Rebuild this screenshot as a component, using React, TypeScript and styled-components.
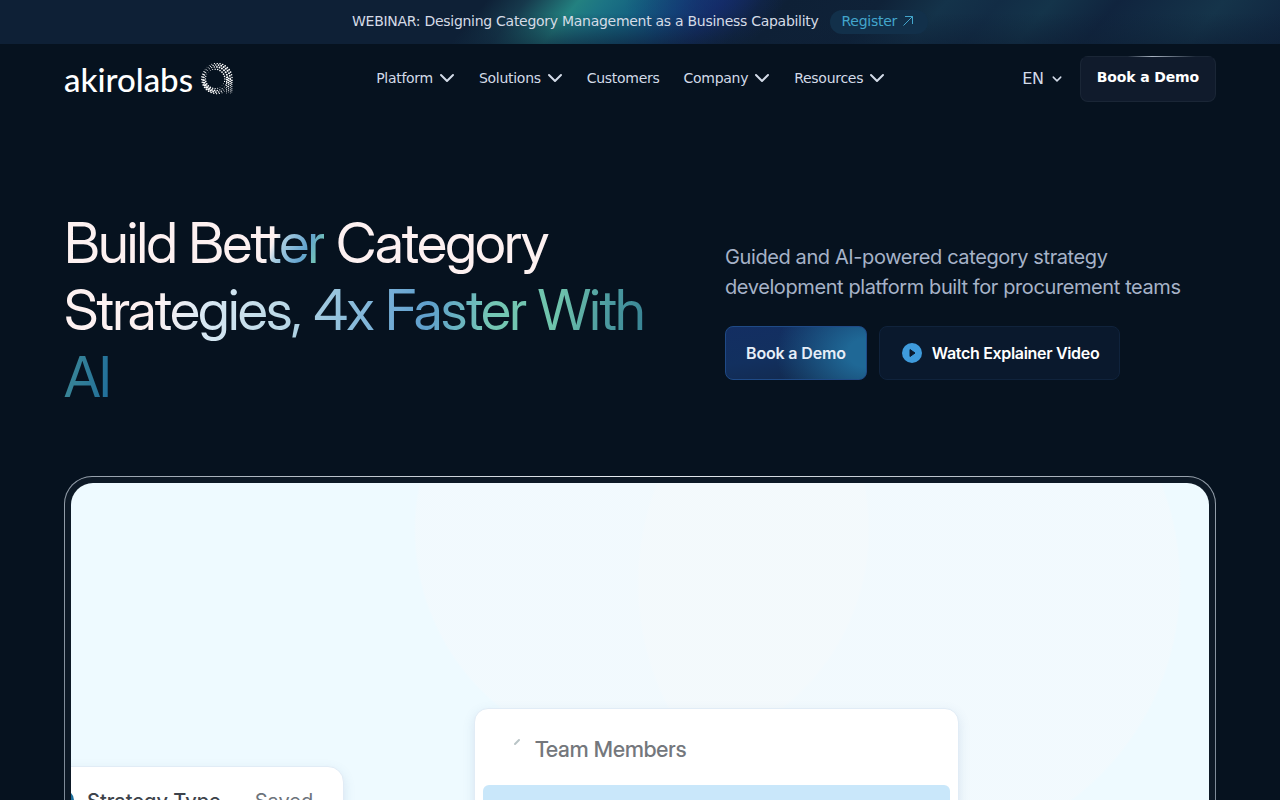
import React from "react";
import styled, { createGlobalStyle } from "styled-components";

const uiFont = `"DejaVu Sans", sans-serif`;
const brandFont = `Inter, sans-serif`;
const displayFont = `"Inter Display", Inter, sans-serif`;

const GlobalStyle = createGlobalStyle`
  *, *::before, *::after { box-sizing: border-box; }
  body {
    margin: 0;
    background: #06121f;
    color: #fff;
    font-family: ${brandFont};
  }
  a { color: inherit; text-decoration: none; }
  button { font: inherit; color: inherit; cursor: pointer; }
`;

const Page = styled.div`
  height: 100vh;
  overflow: hidden;
`;

const Banner = styled.aside`
  display: flex;
  align-items: center;
  justify-content: center;
  gap: 11px;
  height: 44px;
  font-family: ${uiFont};
  font-size: 14px;
  line-height: 20px;
  letter-spacing: -0.02em;
  color: #d5dbe6;
  background:
    linear-gradient(180deg, transparent 30%, rgba(14, 32, 54, 0.6) 100%),
    radial-gradient(80px 50px at 55% 0%, rgba(22, 40, 108, 0.5), transparent),
    linear-gradient(130deg,
      #0e2036 0%, #0e2036 37%, #16394c 40%, #238180 44%, #1c7484 46%, #146180 49%,
      #12497a 52%, #132e66 55%, #0f2340 58%, #0e2036 60%, #0f2238 67%, #14334a 72%,
      #122c45 76%, #14344a 80%, #10243e 85%, #15344a 93%, #10243e 100%);
`;

const BannerText = styled.p`
  margin: 0;
  padding-bottom: 2px;
`;

const RegisterLink = styled.a`
  display: flex;
  align-items: center;
  gap: 5px;
  height: 24px;
  padding: 0 14px 2px 12px;
  border-radius: 12px;
  background: #12304a;
  color: #43a6cc;
`;

const Header = styled.header`
  display: flex;
  align-items: center;
  justify-content: space-between;
  height: 70px;
  padding: 0 64px;
  font-family: ${uiFont};
`;

const Brand = styled.a`
  display: flex;
  align-items: center;
  gap: 8px;
  font-family: Lato, sans-serif;
  font-size: 33px;
  line-height: 32px;
  font-weight: 500;
`;

const Nav = styled.nav`
  display: flex;
  gap: 24px;
  padding: 0 0 2px 6px;
`;

const NavItem = styled.button`
  display: flex;
  align-items: center;
  gap: 6px;
  padding: 0;
  border: 0;
  background: none;
  color: #d3dbe8;
  font-size: 14px;
  line-height: 20px;
  letter-spacing: -0.02em;
`;

const HeaderActions = styled.div`
  display: flex;
  align-items: center;
  gap: 18px;
`;

const LanguageButton = styled(NavItem)`
  font-size: 16px;
  gap: 8px;
`;

const HeaderDemo = styled.a`
  height: 46px;
  padding: 10px 16px;
  border: 1px solid #1a2636;
  border-top-color: transparent;
  border-radius: 8px;
  background:
    linear-gradient(90deg, #1a2636 35%, #a9b4c2 53%, #1a2636 85%) top / 100% 1px no-repeat border-box,
    #101b2c;
  font-size: 14px;
  line-height: 20px;
  font-weight: 700;
  letter-spacing: -0.01em;
`;

const Hero = styled.main`
  padding: 96px 64px 0;
`;

const Intro = styled.section`
  display: grid;
  grid-template-columns: 585px 1fr;
  gap: 76px;
  align-items: center;
`;

const Title = styled.h1`
  margin: 0;
  font-family: ${displayFont};
  font-size: 56px;
  line-height: 67px;
  font-weight: 400;
  letter-spacing: -0.032em;
  color: #fdf1f1;
`;

const TitleLead = styled.span`
  color: transparent;
  background: linear-gradient(115deg,
    #fdf1f1 0%, #fdf1f1 77%, #a9cde0 80%, #63a3cf 89%, #74c6b4 95%, #74c6b4 100%);
  -webkit-background-clip: text;
  background-clip: text;
`;

const TitleAccent = styled.span`
  color: transparent;
  background: linear-gradient(100deg,
    #fdf1f1 0%, #fdf1f1 15%, #d8e8f3 23%, #bcd9e7 35%, #8fbfdb 45%, #78b0d8 51%,
    #5f9fcc 58%, #74c6b4 68%, #6fc4ac 78%, #4d9ba0 86%, #3a8696 92%, #22709a 99%);
  -webkit-background-clip: text;
  background-clip: text;
`;

const Pitch = styled.div`
  display: flex;
  flex-direction: column;
  gap: 24px;
`;

const Lead = styled.p`
  margin: 0;
  font-size: 20px;
  line-height: 30px;
  letter-spacing: -0.02em;
  color: #a6b3c8;
`;

const ButtonRow = styled.div`
  display: flex;
  gap: 12px;
`;

const ActionButton = styled.button<{ $primary?: boolean }>`
  display: flex;
  align-items: center;
  gap: 8px;
  height: 54px;
  padding: 0 20px;
  border: 1px solid ${(p) => (p.$primary ? "#1f4a86" : "#10233c")};
  border-radius: 8px;
  background: ${(p) =>
    p.$primary
      ? "radial-gradient(90px 70px at 100% 50%, #1f6896 20%, transparent), linear-gradient(170deg, #132e62, #12305f 50%, #12284a)"
      : "#0a192d"};
  font-size: 16px;
  line-height: 24px;
  font-weight: 600;
  letter-spacing: ${(p) => (p.$primary ? "-0.01em" : "-0.02em")};
  color: ${(p) => (p.$primary ? "#e6eef8" : "#fff")};
`;

const Frame = styled.section`
  height: 560px;
  margin-top: 65px;
  padding: 6px;
  border-radius: 28px;
  border: 1px solid transparent;
  background:
    linear-gradient(#0d1926, #0d1926) padding-box,
    radial-gradient(700px 420px at 50% 0, #e8edf2, #7f8b98) border-box;
`;

const Demo = styled.div`
  position: relative;
  height: 100%;
  overflow: hidden;
  border-radius: 22px;
  background:
    radial-gradient(circle at 838px 100px, rgba(245, 249, 252, 0.5) 0 270px, transparent 272px),
    radial-gradient(circle at 571px 47px, rgba(245, 249, 252, 0.5) 0 226px, transparent 228px),
    #eefaff;
  color: #3d434b;
`;

const Card = styled.div`
  position: absolute;
  background: #fff;
  border: 1px solid #e1ecf6;
  box-shadow: 0 4px 12px rgba(90, 120, 170, 0.16);
  font-size: 20px;
  line-height: 28px;
`;

const StrategyCard = styled(Card)`
  top: 283px;
  left: -20px;
  display: flex;
  gap: 34px;
  width: 293px;
  height: 200px;
  padding: 20px 0 0 35px;
  border-radius: 16px;
  font-weight: 500;
`;

const StatusDot = styled.i`
  position: absolute;
  top: 23px;
  left: 2px;
  width: 20px;
  height: 20px;
  border-radius: 50%;
  background: #1c6f9c;
`;

const Saved = styled.span`
  color: #6d737b;
  font-weight: 400;
`;

const TeamCard = styled(Card)`
  top: 225px;
  left: 403px;
  width: 485px;
  height: 300px;
  padding: 26px 8px 0;
  border-radius: 14px;
  font-family: ${displayFont};
  font-size: 22px;
  font-weight: 500;
  color: #74777c;
`;

const TeamHeading = styled.div`
  display: flex;
  gap: 12px;
  padding-left: 28px;
`;

const Selection = styled.div`
  height: 60px;
  margin-top: 22px;
  border-radius: 6px;
  background: #c9e7fa;
`;

const Chevron = ({ size }: { size: number }) => (
  <svg width={size} height={size} viewBox="0 0 16 16" fill="none" stroke="currentColor" strokeWidth={size > 12 ? 2 : 2.4} strokeLinecap="round" strokeLinejoin="round" aria-hidden="true">
    <path d="M2 5l6 6 6-6" />
  </svg>
);

const markDots: { x: number; y: number; r: number }[] = [];
[
  { cx: 14.6, cy: 16.4, radius: 10, count: 24 },
  { cx: 15.2, cy: 16.2, radius: 12.2, count: 28 },
  { cx: 16, cy: 16, radius: 14, count: 31 },
  { cx: 16.4, cy: 16, radius: 15.6, count: 34 },
].forEach(({ cx, cy, radius, count }, ring) => {
  for (let i = 0; i < count; i++) {
    const a = (i / count) * Math.PI * 2 + ring * 0.1;
    const weight = Math.abs(Math.cos(a + 0.75));
    const edge = ring === 0 || ring === 3 ? 0.3 : 0.45;
    markDots.push({ x: cx + Math.cos(a) * radius, y: cy + Math.sin(a) * radius, r: edge + weight * 0.6 });
  }
});
[26.4, 28.4, 30.2, 31.8].forEach((x, col) => {
  for (let y = 15 + col; y < 32; y += 2) markDots.push({ x, y, r: 0.9 - (y - 12) * 0.022 });
});

const LogoMark = () => (
  <svg width="32" height="32" viewBox="0 0 33 33" fill="#fff" aria-hidden="true">
    {markDots.map((d, i) => (
      <circle key={i} cx={d.x} cy={d.y} r={d.r} />
    ))}
  </svg>
);

const navItems = [
  { label: "Platform", menu: true },
  { label: "Solutions", menu: true },
  { label: "Customers", menu: false },
  { label: "Company", menu: true },
  { label: "Resources", menu: true },
];

export default function App() {
  return (
    <Page>
      <GlobalStyle />
      <Banner>
        <BannerText>WEBINAR: Designing Category Management as a Business Capability</BannerText>
        <RegisterLink href="#register">
          Register
          <svg width="12" height="12" viewBox="0 0 12 12" fill="none" stroke="currentColor" aria-hidden="true">
            <path d="M1.500 10.500L10.500 1.500M3 1.500h7.500v7.500" />
          </svg>
        </RegisterLink>
      </Banner>
      <Header>
        <Brand href="#home">
          akirolabs
          <LogoMark />
        </Brand>
        <Nav>
          {navItems.map((item) =>
            item.menu ? (
              <NavItem key={item.label} type="button">
                {item.label}
                <Chevron size={16} />
              </NavItem>
            ) : (
              <NavItem key={item.label} as="a" href="#customers">
                {item.label}
              </NavItem>
            )
          )}
        </Nav>
        <HeaderActions>
          <LanguageButton type="button">
            EN
            <Chevron size={10} />
          </LanguageButton>
          <HeaderDemo href="#demo">Book a Demo</HeaderDemo>
        </HeaderActions>
      </Header>
      <Hero>
        <Intro>
          <Title>
            <TitleLead>Build Better</TitleLead> Category <TitleAccent>Strategies, 4x Faster With AI</TitleAccent>
          </Title>
          <Pitch>
            <Lead>Guided and AI-powered category strategy development platform built for procurement teams</Lead>
            <ButtonRow>
              <ActionButton type="button" $primary>Book a Demo</ActionButton>
              <ActionButton type="button">
                <svg width="24" height="24" viewBox="0 0 24 24" aria-hidden="true">
                  <circle cx="12" cy="12" r="10" fill="#3f9bdc" />
                  <path d="M10 8.500l5 3.500-5 3.500z" fill="#0a192d" stroke="#0a192d" strokeLinejoin="round" />
                </svg>
                Watch Explainer Video
              </ActionButton>
            </ButtonRow>
          </Pitch>
        </Intro>
        <Frame>
          <Demo>
            <StrategyCard>
              <StatusDot />
              Strategy Type
              <Saved>Saved</Saved>
            </StrategyCard>
            <TeamCard>
              <TeamHeading>
                <svg width="12" height="28" viewBox="0 0 12 28" fill="none" stroke="#b9c4c6" strokeWidth="2" strokeLinecap="round" aria-hidden="true">
                  <path d="M4 9l4-4" />
                </svg>
                Team Members
              </TeamHeading>
              <Selection />
            </TeamCard>
          </Demo>
        </Frame>
      </Hero>
    </Page>
  );
}
